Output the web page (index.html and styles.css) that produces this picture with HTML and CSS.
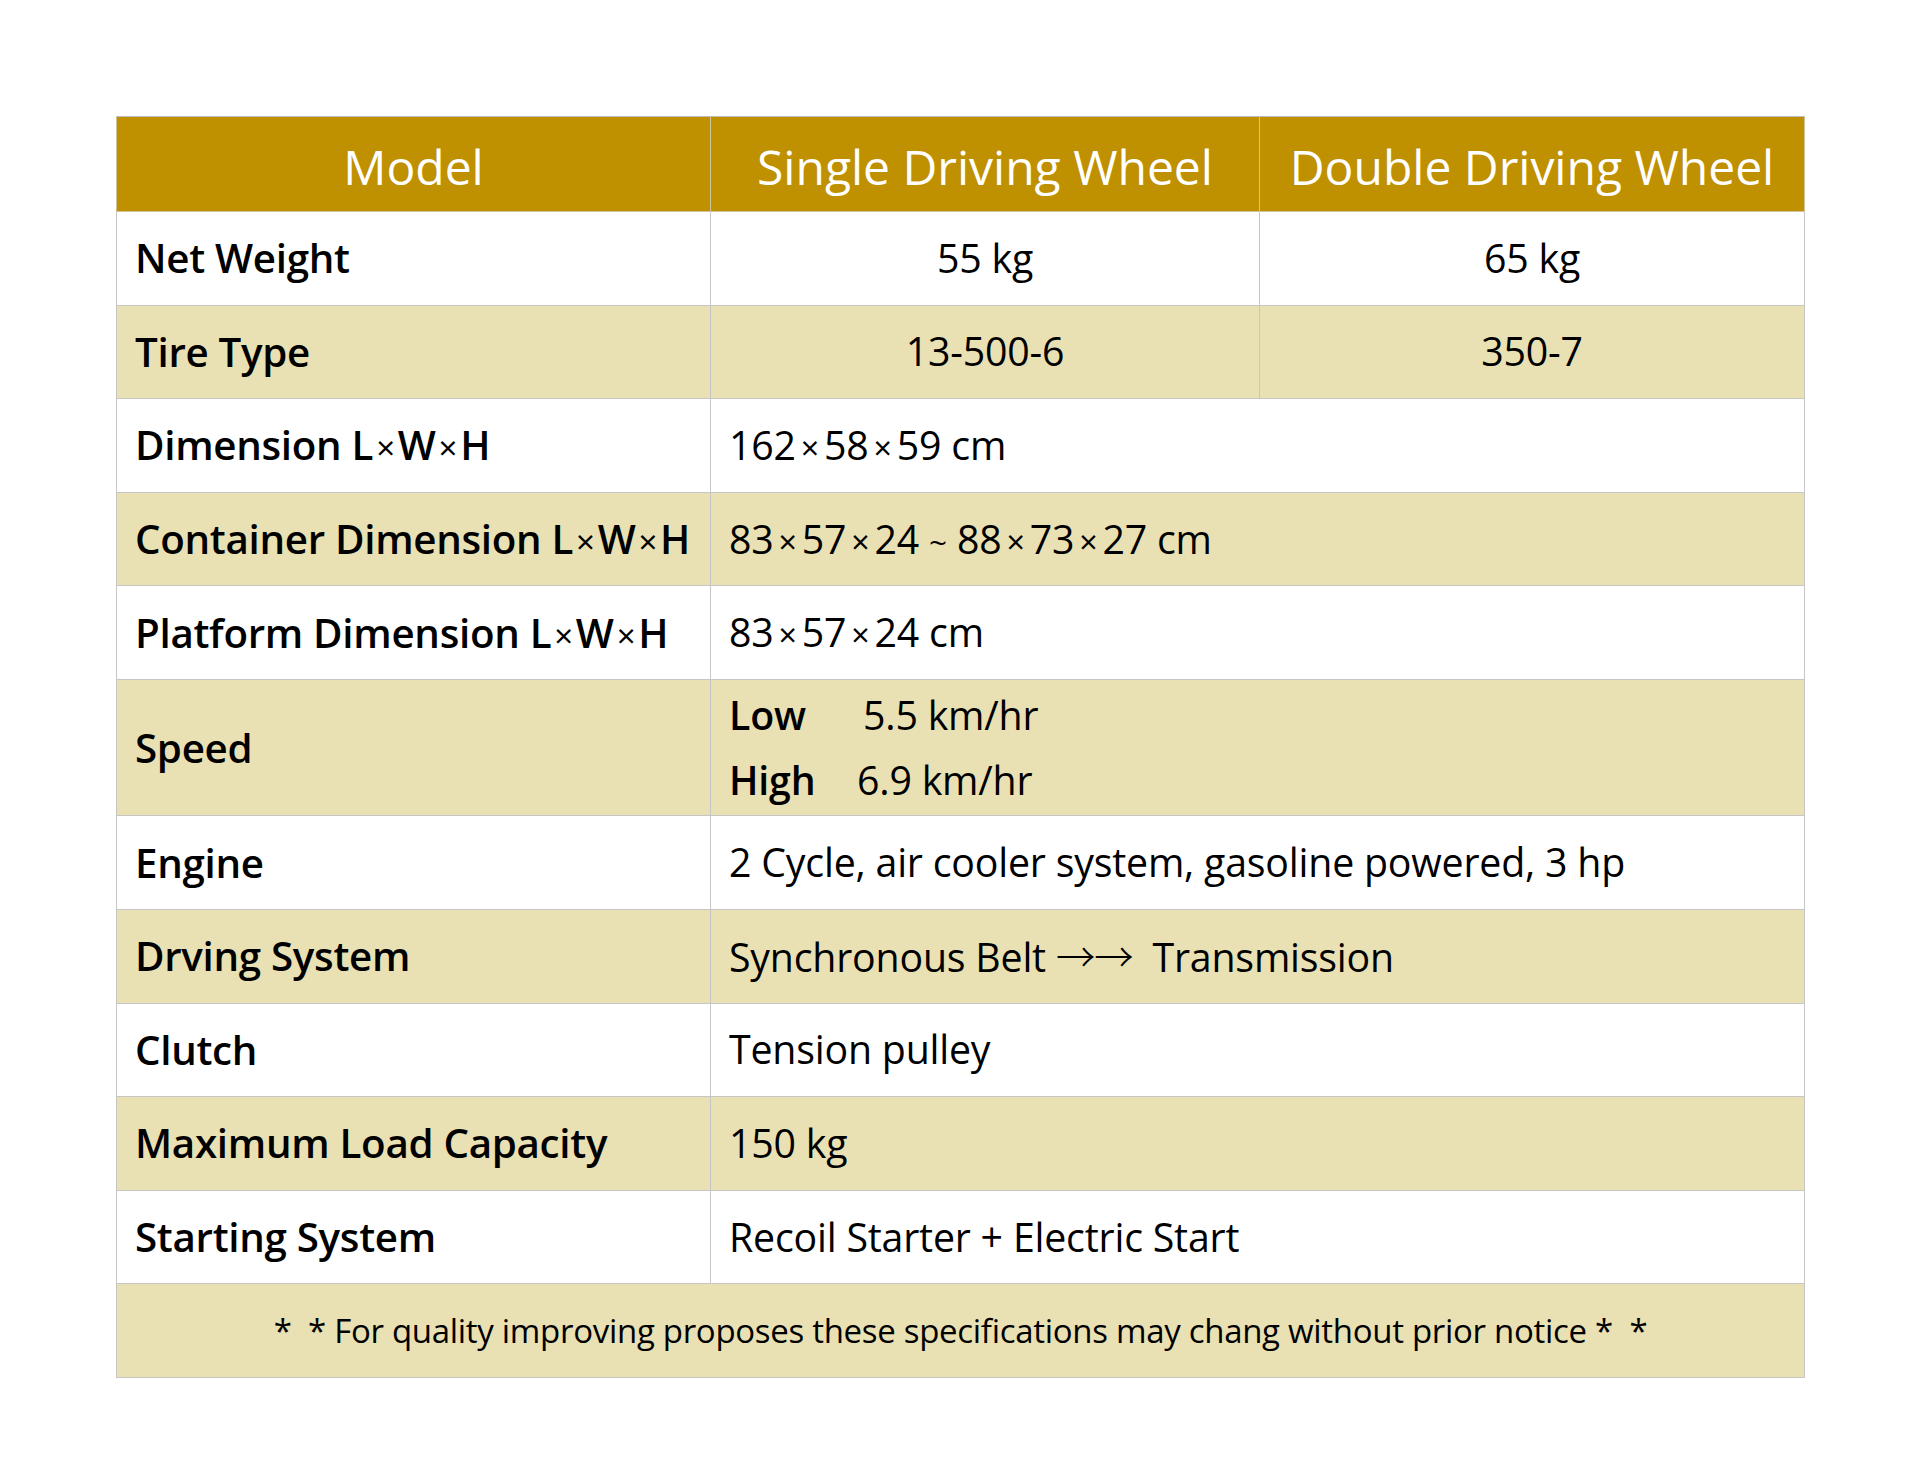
FILE: index.html
```html
<!DOCTYPE html>
<html lang="en">
<head>
<meta charset="utf-8">
<title>Specifications</title>
<link rel="stylesheet" href="styles.css">
</head>
<body>
<main class="page">
  <table class="spec">
    <colgroup>
      <col class="c1">
      <col class="c2">
      <col class="c3">
    </colgroup>
    <thead>
      <tr class="head">
        <th>Model</th>
        <th>Single Driving Wheel</th>
        <th>Double Driving Wheel</th>
      </tr>
    </thead>
    <tbody>
      <tr>
        <th>Net Weight</th>
        <td class="center">55 kg</td>
        <td class="center">65 kg</td>
      </tr>
      <tr class="alt">
        <th>Tire Type</th>
        <td class="center">13-500-6</td>
        <td class="center">350-7</td>
      </tr>
      <tr>
        <th>Dimension L<span class="x">×</span>W<span class="x">×</span>H</th>
        <td colspan="2">162<span class="x">×</span>58<span class="x">×</span>59 cm</td>
      </tr>
      <tr class="alt">
        <th>Container Dimension L<span class="x">×</span>W<span class="x">×</span>H</th>
        <td colspan="2">83<span class="x">×</span>57<span class="x">×</span>24<span class="tl">~</span>88<span class="x">×</span>73<span class="x">×</span>27 cm</td>
      </tr>
      <tr>
        <th>Platform Dimension L<span class="x">×</span>W<span class="x">×</span>H</th>
        <td colspan="2">83<span class="x">×</span>57<span class="x">×</span>24 cm</td>
      </tr>
      <tr class="alt tall">
        <th>Speed</th>
        <td colspan="2">
          <div class="speed"><b class="lo">Low</b>5.5 km/hr</div>
          <div class="speed"><b class="hi">High</b>6.9 km/hr</div>
        </td>
      </tr>
      <tr>
        <th>Engine</th>
        <td colspan="2">2 Cycle, air cooler system, gasoline powered, 3 hp</td>
      </tr>
      <tr class="alt">
        <th>Drving System</th>
        <td colspan="2">Synchronous Belt <span class="arr">→→</span>&nbsp;&nbsp;Transmission</td>
      </tr>
      <tr>
        <th>Clutch</th>
        <td colspan="2">Tension pulley</td>
      </tr>
      <tr class="alt">
        <th>Maximum Load Capacity</th>
        <td colspan="2">150 kg</td>
      </tr>
      <tr>
        <th>Starting System</th>
        <td colspan="2">Recoil Starter + Electric Start</td>
      </tr>
      <tr class="alt">
        <td class="note" colspan="3">*&nbsp; * For quality improving proposes these specifications may chang without prior notice *&nbsp; *</td>
      </tr>
    </tbody>
  </table>
</main>
</body>
</html>
```

FILE: styles.css
```css
html, body {
  margin: 0;
  padding: 0;
  background: #ffffff;
}

.page {
  padding: 116px 0 0 116px;
  font-family: "Open Sans", "Noto Sans", "Liberation Sans", sans-serif;
  color: #000;
}

.spec {
  width: 1688px;
  border-collapse: collapse;
  table-layout: fixed;
  border: 1px solid #bdbdbd;
}

.c1 { width: 594px; }
.c2 { width: 549px; }
.c3 { width: 545px; }

.spec th,
.spec td {
  border: 1px solid #c6c6c6;
  height: 92.6px;
  padding: 0 0 0 18px;
  vertical-align: middle;
  line-height: 1.2;
  text-align: left;
}

.spec tbody th {
  font-weight: 600;
  font-size: 40.3px;
  letter-spacing: -0.3px;
}

.spec td {
  font-weight: 400;
  font-size: 39.3px;
  letter-spacing: -0.2px;
}

.spec .head th {
  background: #bf9000;
  color: #ffffff;
  font-weight: 400;
  font-size: 48px;
  text-align: center;
  padding: 6px 0 0 0;
  height: 88px;
  border-color: #d0c39a;
  border-top-color: #bdbdbd;
}

.spec .alt th,
.spec .alt td {
  background: #e9e1b3;
}

.spec td.center {
  text-align: center;
  padding: 0;
}

.spec .tall th,
.spec .tall td {
  height: 135.5px;
}

.x {
  font-size: 0.82em;
  margin: 0 5px;
  font-weight: 400;
}

.spec th .x {
  margin: 0 3px;
}

.tl {
  font-size: 0.8em;
  margin: 0 10px;
}

.arr {
  font-family: "Noto Sans CJK JP", "DejaVu Sans", sans-serif;
  font-size: 1em;
  font-weight: 300;
  letter-spacing: -1px;
}

.speed {
  line-height: 65px;
}

.speed b {
  font-weight: 600;
  display: inline-block;
}

.lo { width: 134px; }
.hi { width: 128px; }

.spec td.note {
  text-align: center;
  padding: 0;
  font-size: 33px;
  letter-spacing: -0.3px;
}
```
